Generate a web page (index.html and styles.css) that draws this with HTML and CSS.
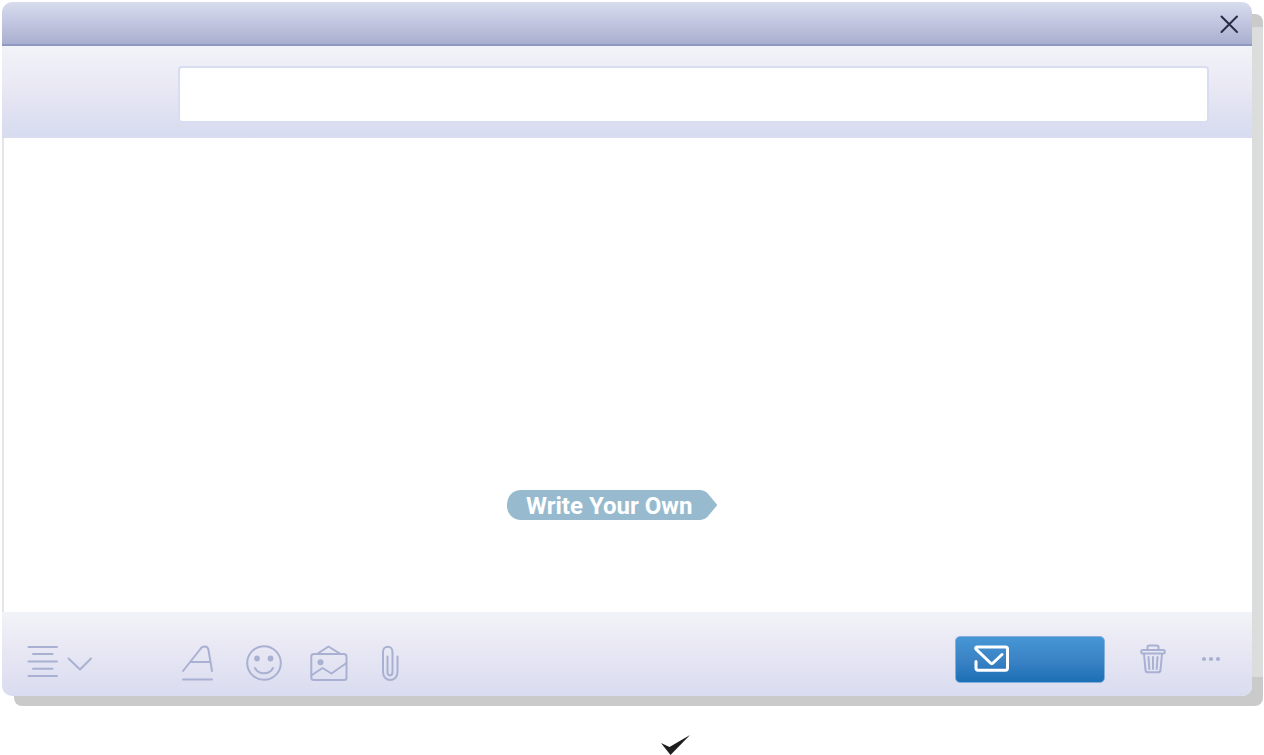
FILE: index.html
```html
<!DOCTYPE html>
<html lang="en">
<head>
<meta charset="utf-8">
<meta name="viewport" content="width=device-width, initial-scale=1">
<title>Compose</title>
<link rel="stylesheet" href="styles.css">
</head>
<body>
<main class="window">
  <form class="composer">
    <header class="titlebar">
      <button class="icon-btn close" type="button" aria-label="Close">
        <svg width="20" height="20" viewBox="0 0 20 20"><path d="M2.500 2.500L18 18M18 2.500L2.500 18"/></svg>
      </button>
    </header>
    <div class="address">
      <input class="field" type="text" aria-label="Recipient">
    </div>
    <div class="editor">
      <textarea class="message" aria-label="Message"></textarea>
      <div class="suggestion">
        <button class="tag" type="button">Write Your Own</button>
      </div>
    </div>
    <footer class="toolbar">
      <button class="icon-btn align" type="button" aria-label="Alignment">
        <svg width="66" height="36" viewBox="0 0 66 36"><path d="M2.500 2H31M7 9H26.500M2.500 16.500H31M7 23.800H26.500M2.500 31H31M42.500 13.500L54 24.500L65 13.500"/></svg>
      </button>
      <div class="tools">
        <button class="icon-btn" type="button" aria-label="Text style">
          <svg width="36" height="36" viewBox="0 0 36 36"><path d="M1 26L18 4.500C20.500 .5 25.800 .5 26.500 5L30 26M9 17H28.500M1 34.500H30"/></svg>
        </button>
        <button class="icon-btn" type="button" aria-label="Emoji">
          <svg width="36" height="36" viewBox="0 0 36 36"><circle cx="18" cy="18" r="16.800"/><circle class="solid" cx="11" cy="13.500" r="2.900"/><circle class="solid" cx="24.500" cy="13.500" r="2.900"/><path d="M9 23C12.500 30 23.500 30 27 23"/></svg>
        </button>
        <button class="icon-btn" type="button" aria-label="Picture">
          <svg width="38" height="36" viewBox="0 0 38 36"><rect x="1.300" y="9" width="35.200" height="26" rx="2.500"/><path d="M7 9L18.500 1.500L30.500 9M2 30L12.500 23L21.500 28.500L36.500 18"/><circle class="solid" cx="10.500" cy="17.300" r="3"/></svg>
        </button>
        <button class="icon-btn" type="button" aria-label="Attach file">
          <svg width="24" height="36" viewBox="-5 0 24 36"><path d="M16.500 11.500V27C16.500 37.500 2 37.500 2 27V7C2 0 11.500 0 11.500 7V27C11.500 31.500 6.500 31.500 6.500 27V11.500"/></svg>
        </button>
      </div>
      <div class="actions">
        <button class="send" type="submit" aria-label="Send">
          <svg width="36" height="28" viewBox="0 0 36 28"><path d="M2 16.500V23Q2 25.200 4 25.200H31.500Q33.500 25.200 33.500 23V4Q33.500 2 31.500 2H3.500Q1 2 2 4.200L16.500 18Q17.800 19.300 19 18L28 9.500"/></svg>
        </button>
        <button class="icon-btn" type="button" aria-label="Delete">
          <svg width="26" height="30" viewBox="0 0 26 30"><path d="M7.500 5V3.300Q7.500 1.500 9.300 1.500H16.700Q18.500 1.500 18.500 3.300V5"/><rect x="1.200" y="6" width="23.600" height="3.600" rx="1.500"/><path d="M4 10L5.500 26Q5.800 28.300 8 28.300H18Q20.200 28.300 20.500 26L22 10M8.500 13L9.300 25M13 13V25M17.500 13L16.700 25"/></svg>
        </button>
        <button class="icon-btn" type="button" aria-label="More">
          <svg width="20" height="6" viewBox="0 0 20 6"><circle class="solid" cx="3" cy="3" r="2.100"/><circle class="solid" cx="10" cy="3" r="2.100"/><circle class="solid" cx="17" cy="3" r="2.100"/></svg>
        </button>
      </div>
    </footer>
  </form>
</main>
<div class="status">
  <svg width="30" height="20" viewBox="0 0 30 20" role="img" aria-label="Done"><path d="M0 8L8.500 12L29 0L9.500 20Z"/></svg>
</div>
</body>
</html>
```
FILE: styles.css
```css
* {
  box-sizing: border-box;
}

body {
  margin: 0;
  min-height: 100vh;
  display: flex;
  flex-direction: column;
  background: #fff;
  font-family: Roboto, "Liberation Sans", sans-serif;
}

button,
input,
textarea {
  font: inherit;
  border: 0;
  margin: 0;
}

svg {
  display: block;
  fill: none;
  stroke: #a9b1d2;
  stroke-width: 2;
  stroke-linecap: round;
  stroke-linejoin: round;
}

.solid {
  fill: #a9b1d2;
  stroke: none;
}

.icon-btn {
  padding: 0;
  background: none;
}

.window {
  position: relative;
  flex: 1;
  display: flex;
  margin: 2px 12px 0 2px;
}

.window::before {
  content: "";
  position: absolute;
  inset: 12px -11px -10px 12px;
  border-radius: 8px;
  background: linear-gradient(#cacaca 13px, #dadddc 13px, #dadddc calc(100% - 29px), #cacaca calc(100% - 29px));
}

.composer {
  position: relative;
  flex: 1;
  display: flex;
  flex-direction: column;
  border-radius: 10px;
  overflow: hidden;
  background: #fff;
}

.titlebar {
  height: 44px;
  display: flex;
  justify-content: flex-end;
  align-items: center;
  padding: 1px 13px 0 0;
  border-bottom: 2px solid #8f97c3;
  background: linear-gradient(#d8dcee, #bfc3de 55%, #a9afcf);
}

.close svg {
  stroke: #292c42;
}

.address {
  padding: 20px 43px 15px 176px;
  background: linear-gradient(#f2f3f8, #e9e8f4 45%, #dadef0 85%, #d9dcf0);
}

.field {
  display: block;
  width: 100%;
  height: 57px;
  padding: 0 16px;
  border: 2px solid #d8ddf1;
  border-radius: 4px;
  background: #fff;
  font-size: 24px;
}

.editor {
  flex: 1;
  display: flex;
  flex-direction: column;
  border-left: 2px solid #e4e5e8;
}

.message {
  flex: 1;
  padding: 16px;
  resize: none;
  background: none;
}

.suggestion {
  padding: 0 0 92px 40.3%;
}

.tag {
  display: block;
  height: 30px;
  padding: 2px 25px 0 19px;
  border-radius: 14px 0 0 14px;
  background: #97bace;
  clip-path: polygon(0 0, calc(100% - 17px) 0, calc(100% - 13px) 1px, calc(100% - 10px) 3px, 100% 50%, calc(100% - 10px) 27px, calc(100% - 13px) 29px, calc(100% - 17px) 100%, 0 100%);
  color: #fff;
  font-size: 24px;
  font-weight: 700;
  line-height: 28px;
  white-space: nowrap;
}

.toolbar {
  height: 84px;
  display: flex;
  align-items: center;
  padding: 17px 31px 0 24px;
  background: linear-gradient(#f2f3f8, #e9e8f4 40%, #d9dcf0);
}

.align {
  margin-right: 90px;
}

.tools {
  display: flex;
  align-items: center;
  gap: 28px;
}

.actions {
  flex: 1;
  display: flex;
  justify-content: flex-end;
  align-items: center;
  gap: 35px;
  padding-bottom: 7px;
}

.send {
  width: 150px;
  height: 47px;
  padding: 0 18px;
  border: 1px solid #82afdc;
  border-radius: 5px;
  background: linear-gradient(#4696d5, #3b83c5 50%, #1d6fb6);
}

.send svg {
  stroke: #fff;
  stroke-width: 3;
}

.status {
  display: flex;
  padding: 39px 0 0 52.3%;
}

.status svg {
  fill: #1d1e20;
  stroke: none;
}
```
